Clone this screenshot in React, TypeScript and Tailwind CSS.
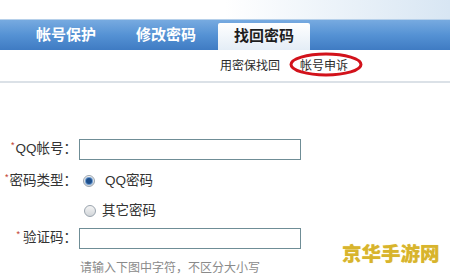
import React from 'react'

const font = { fontFamily: '"Liberation Sans", "Noto Sans CJK SC", sans-serif' }

function Radio({ checked }: { checked?: boolean }) {
    return (
        <span className="flex h-[12px] w-[12px] items-center justify-center rounded-full border border-[#9aa4ae] bg-gradient-to-b from-[#f4f4f4] to-[#d2d6da]">
            {checked && <span className="h-[6px] w-[6px] rounded-full bg-[#1d4f8c] shadow-[0_0_0_1px_#6d9bd0]" />}
        </span>
    )
}

export default function App() {
    return (
        <div className="relative h-[277px] w-[450px] overflow-hidden bg-white text-[#333]" style={font}>
            {/* header strip */}
            <div className="h-[19px] bg-gradient-to-r from-white via-white to-[#d8e6f3]" />

            {/* main tabs */}
            <div className="flex h-[31px] items-end border-t border-[#b6d0ea] bg-gradient-to-b from-[#77aae0] via-[#5592d4] to-[#3f7bc3] pl-[16px]">
                <div className="flex h-full w-[100px] items-center justify-center text-[15px] font-bold text-white">帐号保护</div>
                <div className="flex h-full w-[100px] items-center justify-center text-[15px] font-bold text-white">修改密码</div>
                <div className="ml-[2px] flex h-[27px] w-[92px] items-center justify-center rounded-t-[2px] bg-gradient-to-b from-white to-[#e4edf6] text-[15px] font-bold text-[#1e1e1e]">找回密码</div>
            </div>

            {/* sub nav */}
            <div className="flex h-[33px] items-center border-b-2 border-[#dbe1e7] pl-[220px] text-[12px] text-[#2b2b2b]">
                <span>用密保找回</span>
                <span className="relative ml-[20px]">
                    帐号申诉
                    <svg className="absolute left-[-11px] top-[-5px]" width="74" height="25" viewBox="0 0 74 25">
                        <ellipse cx="37" cy="12.5" rx="35" ry="10.5" fill="none" stroke="#d2121b" strokeWidth="3" />
                    </svg>
                </span>
            </div>

            {/* form */}
            <div className="pt-[56px] text-[13.5px]">
                <div className="flex h-[21px] items-center">
                    <div className="w-[77px] text-right">
                        <span className="mr-[1px] align-top text-[9px] text-[#c0392b]">*</span>QQ帐号：
                    </div>
                    <input className="ml-[2px] h-[21px] w-[222px] border border-[#6f8d96] bg-white outline-none" />
                </div>

                <div className="mt-[11px] flex h-[20px] items-center">
                    <div className="w-[77px] text-right">
                        <span className="mr-[1px] align-top text-[9px] text-[#c0392b]">*</span>密码类型：
                    </div>
                    <span className="ml-[6px]"><Radio checked /></span>
                    <span className="ml-[10px]">QQ密码</span>
                </div>

                <div className="mt-[10px] flex h-[20px] items-center">
                    <span className="ml-[84px]"><Radio /></span>
                    <span className="ml-[6px]">其它密码</span>
                </div>

                <div className="mt-[7px] flex h-[21px] items-center">
                    <div className="w-[77px] text-right">
                        <span className="mr-[3px] align-top text-[9px] text-[#c0392b]">*</span>验证码：
                    </div>
                    <input className="ml-[2px] h-[21px] w-[222px] border border-[#6f8d96] bg-white outline-none" />
                </div>

                <div className="mt-[11px] pl-[80px] text-[12px] leading-[16px] text-[#8a8a8a]">请输入下图中字符，不区分大小写</div>
            </div>

            {/* watermark */}
            <div
                className="absolute left-[342px] top-[242px] text-[19.5px] font-black leading-[22px] text-[#d8b42c] [text-shadow:0_0_1px_#f3e3a0]"
                style={{ fontFamily: '"Noto Sans CJK SC", sans-serif' }}
            >
                京华手游网
            </div>
        </div>
    )
}
